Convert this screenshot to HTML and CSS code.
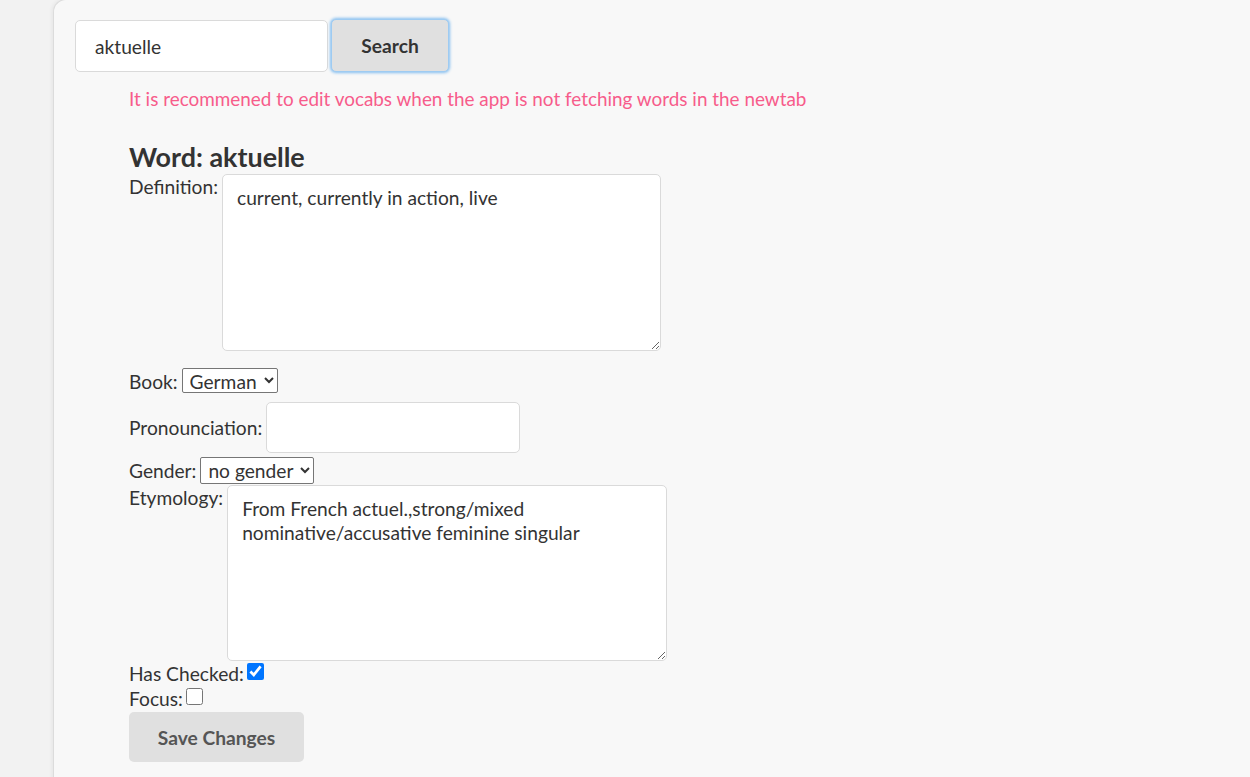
FILE: index.html
```html
<!DOCTYPE html>
<html>
<head>
<meta charset="utf-8">
<link rel="stylesheet" href="styles.css">
</head>
<body>
<div class="card">
  <div class="search">
    <input class="search-input" type="text" value="aktuelle">
    <button class="search-btn">Search</button>
  </div>
  <div class="editor">
    <p class="warning">It is recommened to edit vocabs when the app is not fetching words in the newtab</p>
    <h2 class="word">Word: aktuelle</h2>
    <div class="row row-top row-def">
      <label class="lbl">Definition:</label>
      <textarea class="area area-def">current, currently in action, live</textarea>
    </div>
    <div class="row row-book">
      <label class="lbl">Book:</label>
      <select class="sel"><option>German</option></select>
    </div>
    <div class="row row-pron">
      <label class="lbl">Pronounciation:</label>
      <input class="pron" type="text">
    </div>
    <div class="row row-gender">
      <label class="lbl">Gender:</label>
      <select class="sel"><option>no gender</option></select>
    </div>
    <div class="row row-top row-ety">
      <label class="lbl">Etymology:</label>
      <textarea class="area area-ety">From French actuel.,strong/mixed nominative/accusative feminine singular</textarea>
    </div>
    <div class="row row-check">
      <label class="lbl">Has Checked:</label>
      <input class="chk" type="checkbox" checked>
    </div>
    <div class="row row-check">
      <label class="lbl">Focus:</label>
      <input class="chk" type="checkbox">
    </div>
    <button class="save-btn">Save Changes</button>
  </div>
</div>
</body>
</html>
```
FILE: styles.css
```css
html, body {
  margin: 0;
  padding: 0;
}
body {
  background: #f2f2f2;
  font-family: Lato, "Liberation Sans", sans-serif;
  color: #333;
  font-size: 19.2px;
}
.card {
  margin-left: 53px;
  margin-top: -1px;
  min-height: 790px;
  background: #f8f8f8;
  border-left: 1px solid #dcdcdc;
  border-top: 1px solid #dcdcdc;
  border-top-left-radius: 13px;
  box-shadow: -1px 0 4px rgba(0,0,0,0.06);
  padding: 20px 0 0 21px;
  box-sizing: border-box;
}
.search {
  display: flex;
  align-items: center;
  gap: 3px;
}
.search-input {
  width: 253px;
  height: 52px;
  box-sizing: border-box;
  border: 1px solid #dadada;
  border-radius: 5px;
  background: #fff;
  padding: 0 19px;
  font-family: inherit;
  font-size: 19.2px;
  color: #333;
  outline: none;
}
.search-btn {
  width: 118px;
  height: 53px;
  box-sizing: border-box;
  background: #e0e0e0;
  border: 1px solid #9ecbf2;
  border-radius: 5px;
  box-shadow: 0 0 3px 1px #86bff0;
  font-family: inherit;
  font-size: 19.2px;
  font-weight: 700;
  color: #333;
  margin-top: -1px;
}
.editor {
  padding-left: 54px;
}
.warning {
  margin: 15px 0 0;
  color: #f75c8b;
  font-size: 18.9px;
  line-height: 24px;
}
.word {
  margin: 31px 0 0;
  font-size: 26.9px;
  font-weight: 700;
  line-height: 30px;
  color: #333;
}
.row {
  display: flex;
  align-items: baseline;
}
.row-top {
  align-items: flex-start;
}
.row-top .lbl {
  margin-top: 1px;
}
.row-def {
  margin-top: 2px;
}
.row-def .lbl {
  margin-top: 1px;
}
.row-ety {
  margin-top: 1px;
}
.lbl {
  line-height: 24px;
  margin-right: 4px;
}
.area {
  box-sizing: border-box;
  width: 439px;
  height: 177px;
  border: 1px solid #dadada;
  border-radius: 5px;
  background: #fff;
  padding: 11px 14px;
  font-family: inherit;
  font-size: 19.2px;
  line-height: 24px;
  color: #333;
  resize: vertical;
  outline: none;
}
.area-ety {
  width: 440px;
  height: 176px;
}
.row-book {
  margin-top: 17px;
}
.sel {
  font-family: inherit;
  font-size: 19.2px;
  color: #333;
  background: #fff;
  border: 1px solid #767676;
  border-radius: 2px;
  height: 25px;
  padding: 0 3px;
}
.row-pron {
  margin-top: 8px;
}
.pron {
  box-sizing: border-box;
  width: 254px;
  height: 51px;
  border: 1px solid #dadada;
  border-radius: 5px;
  background: #fff;
  font-family: inherit;
  font-size: 19.2px;
  padding: 0 14px;
  outline: none;
}
.row-gender {
  margin-top: 4px;
}
.row-gender .sel {
  height: 27px;
}
.row-check {
  align-items: flex-start;
  height: 25px;
}
.row-check .lbl {
  margin-right: 3px;
  line-height: 24px;
  padding-top: 1px;
}
.chk {
  width: 17px;
  height: 17px;
  margin: 2px 0 0 0;
  accent-color: #0075ff;
}
.save-btn {
  margin-top: 1px;
  width: 175px;
  height: 50px;
  background: #e0e0e0;
  border: none;
  border-radius: 5px;
  font-family: inherit;
  font-size: 19.2px;
  font-weight: 700;
  color: #555;
}
```
